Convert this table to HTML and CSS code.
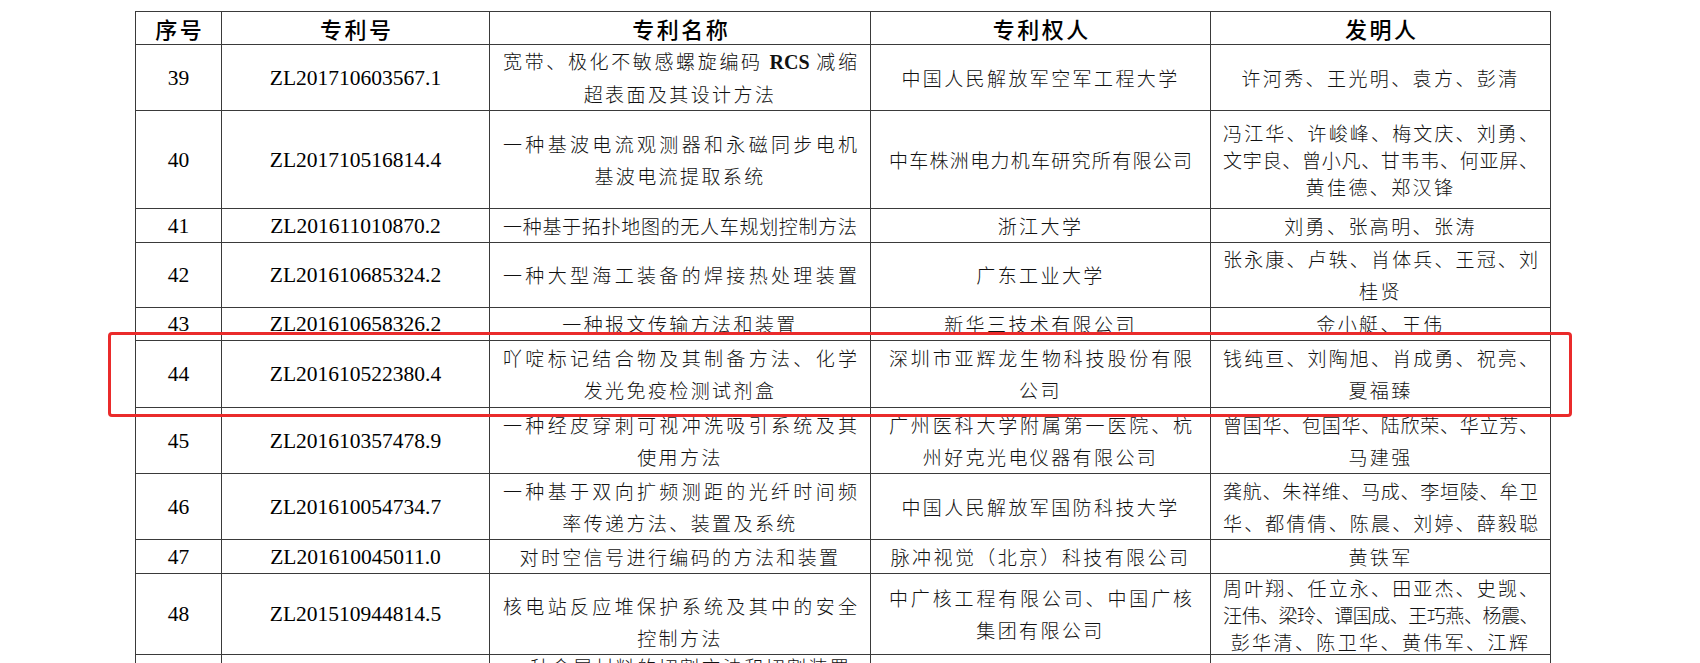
FILE: index.html
```html
<!DOCTYPE html>
<html lang="zh-CN">
<head>
<meta charset="utf-8">
<title>专利列表</title>
<link rel="stylesheet" href="styles.css">
</head>
<body>
<div class="tbl">
  <div class="row r-h">
    <div class="c h">序号</div>
    <div class="c h">专利号</div>
    <div class="c h">专利名称</div>
    <div class="c h">专利权人</div>
    <div class="c h">发明人</div>
  </div>

  <div class="row r2">
    <div class="c num">39</div>
    <div class="c num">ZL201710603567.1</div>
    <div class="c cn nm"><div class="l j">宽带、极化不敏感螺旋编码 <span class="lat">RCS</span> 减缩</div><div class="l">超表面及其设计方法</div></div>
    <div class="c cn ow"><div class="l">中国人民解放军空军工程大学</div></div>
    <div class="c cn iv"><div class="l">许河秀、王光明、袁方、彭清</div></div>
  </div>

  <div class="row r3">
    <div class="c num">40</div>
    <div class="c num">ZL201710516814.4</div>
    <div class="c cn nm lh2"><div class="l j">一种基波电流观测器和永磁同步电机</div><div class="l">基波电流提取系统</div></div>
    <div class="c cn ow"><div class="l j">中车株洲电力机车研究所有限公司</div></div>
    <div class="c cn iv"><div class="l j">冯江华、许峻峰、梅文庆、刘勇、</div><div class="l j">文宇良、曾小凡、甘韦韦、何亚屏、</div><div class="l">黄佳德、郑汉锋</div></div>
  </div>

  <div class="row r1">
    <div class="c num">41</div>
    <div class="c num">ZL201611010870.2</div>
    <div class="c cn nm"><div class="l j">一种基于拓扑地图的无人车规划控制方法</div></div>
    <div class="c cn ow"><div class="l">浙江大学</div></div>
    <div class="c cn iv"><div class="l">刘勇、张高明、张涛</div></div>
  </div>

  <div class="row r2">
    <div class="c num">42</div>
    <div class="c num">ZL201610685324.2</div>
    <div class="c cn nm"><div class="l j">一种大型海工装备的焊接热处理装置</div></div>
    <div class="c cn ow"><div class="l">广东工业大学</div></div>
    <div class="c cn iv"><div class="l j">张永康、卢轶、肖体兵、王冠、刘</div><div class="l">桂贤</div></div>
  </div>

  <div class="row r1">
    <div class="c num">43</div>
    <div class="c num">ZL201610658326.2</div>
    <div class="c cn nm"><div class="l">一种报文传输方法和装置</div></div>
    <div class="c cn ow"><div class="l">新华三技术有限公司</div></div>
    <div class="c cn iv"><div class="l">金小艇、王伟</div></div>
  </div>

  <div class="row r2">
    <div class="c num">44</div>
    <div class="c num">ZL201610522380.4</div>
    <div class="c cn nm"><div class="l j">吖啶标记结合物及其制备方法、化学</div><div class="l">发光免疫检测试剂盒</div></div>
    <div class="c cn ow"><div class="l j">深圳市亚辉龙生物科技股份有限</div><div class="l">公司</div></div>
    <div class="c cn iv"><div class="l j">钱纯亘、刘陶旭、肖成勇、祝亮、</div><div class="l">夏福臻</div></div>
  </div>

  <div class="row r2">
    <div class="c num">45</div>
    <div class="c num">ZL201610357478.9</div>
    <div class="c cn nm"><div class="l j">一种经皮穿刺可视冲洗吸引系统及其</div><div class="l">使用方法</div></div>
    <div class="c cn ow"><div class="l j">广州医科大学附属第一医院、杭</div><div class="l">州好克光电仪器有限公司</div></div>
    <div class="c cn iv"><div class="l j">曾国华、包国华、陆欣荣、华立芳、</div><div class="l">马建强</div></div>
  </div>

  <div class="row r2">
    <div class="c num">46</div>
    <div class="c num">ZL201610054734.7</div>
    <div class="c cn nm"><div class="l j">一种基于双向扩频测距的光纤时间频</div><div class="l">率传递方法、装置及系统</div></div>
    <div class="c cn ow"><div class="l">中国人民解放军国防科技大学</div></div>
    <div class="c cn iv"><div class="l j">龚航、朱祥维、马成、李垣陵、牟卫</div><div class="l j">华、都倩倩、陈晨、刘婷、薛毅聪</div></div>
  </div>

  <div class="row r1">
    <div class="c num">47</div>
    <div class="c num">ZL201610045011.0</div>
    <div class="c cn nm"><div class="l">对时空信号进行编码的方法和装置</div></div>
    <div class="c cn ow"><div class="l">脉冲视觉（北京）科技有限公司</div></div>
    <div class="c cn iv"><div class="l">黄铁军</div></div>
  </div>

  <div class="row r3t">
    <div class="c num">48</div>
    <div class="c num">ZL201510944814.5</div>
    <div class="c cn nm low"><div class="l j">核电站反应堆保护系统及其中的安全</div><div class="l">控制方法</div></div>
    <div class="c cn ow"><div class="l j">中广核工程有限公司、中国广核</div><div class="l">集团有限公司</div></div>
    <div class="c cn iv lh3"><div class="l j">周叶翔、任立永、田亚杰、史觊、</div><div class="l j t">汪伟、梁玲、谭国成、王巧燕、杨震、</div><div class="l">彭华清、陈卫华、黄伟军、江辉</div></div>
  </div>

  <div class="row r-last">
    <div class="c num">49</div>
    <div class="c num">ZL201510788866.8</div>
    <div class="c cn nm top"><div class="l">一种金属材料的切割方法和切割装置</div></div>
    <div class="c cn ow"><div class="l">中国科学院</div></div>
    <div class="c cn iv"><div class="l">王明</div></div>
  </div>
</div>

<div class="mark"></div>
</body>
</html>
```

FILE: styles.css
```css
html, body {
  margin: 0;
  padding: 0;
  background: #ffffff;
}

body {
  width: 1700px;
  height: 663px;
  overflow: hidden;
  position: relative;
}

.tbl {
  margin: 11px 0 0 135px;
  width: 1416px;
  box-sizing: border-box;
  display: grid;
  grid-template-columns: 85px 267px 380px 339px 339px;
  grid-template-rows: 32px 65px 97px 33px 64px 32px 66px 65px 65px 33px 80px 80px;
  gap: 1px;
  padding: 1px;
  background: #3a3a3a;
}

.row {
  display: contents;
}

.c {
  background: #ffffff;
  display: flex;
  flex-direction: column;
  justify-content: center;
  text-align: center;
  color: #111111;
  min-width: 0;
  overflow: hidden;
}

.h {
  font-family: "Noto Sans CJK SC", sans-serif;
  font-size: 22px;
  font-weight: 500;
  letter-spacing: 2.5px;
  line-height: 30px;
  color: #000000;
  padding-left: 2.5px;
}

.num {
  font-family: "Liberation Serif", serif;
  font-size: 21.5px;
  color: #000000;
  line-height: 28px;
}

.cn {
  font-family: "Noto Sans CJK SC", sans-serif;
  font-size: 19px;
  font-weight: 300;
  letter-spacing: 2.4px;
  line-height: 32px;
}

.nm {
  padding: 0 13px;
}

.ow {
  padding: 0 18px;
}

.iv {
  padding: 0 12px;
}

.lh2 {
  line-height: 32px;
}

.r3 .iv,
.lh3 {
  line-height: 27px;
}

.l {
  display: block;
}

.j {
  letter-spacing: 0;
  text-align: justify;
  text-align-last: justify;
}

.t {
  letter-spacing: -0.5px;
}

.lat {
  font-family: "Liberation Serif", serif;
  font-size: 20px;
  font-weight: 700;
  letter-spacing: 0;
}

.low {
  padding-top: 16px;
}

.top {
  justify-content: flex-start;
  padding-top: 2px;
  line-height: 20px;
}

.mark {
  position: absolute;
  left: 108px;
  top: 332px;
  width: 1464px;
  height: 85px;
  box-sizing: border-box;
  border: 3px solid #ea2b2b;
  border-radius: 4px;
  pointer-events: none;
}
```
